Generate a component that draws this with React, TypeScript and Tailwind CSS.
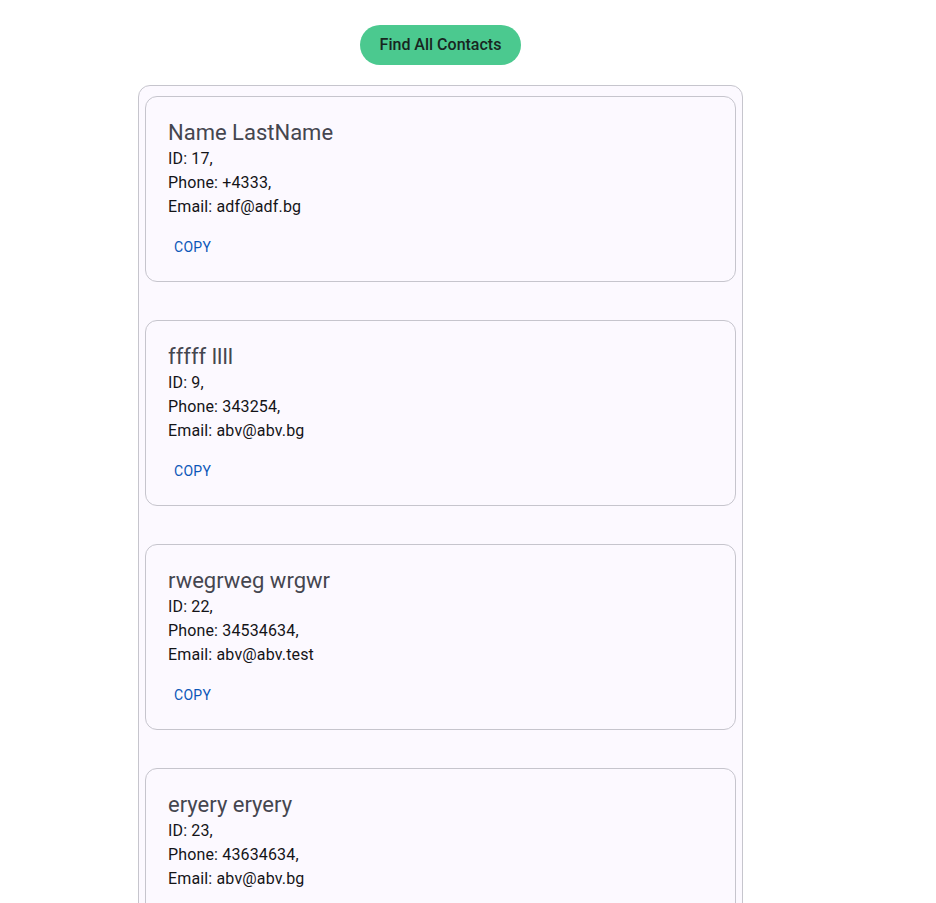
import React from 'react';

interface Contact {
  id: number;
  firstName: string;
  lastName: string;
  phone: string;
  email: string;
}

const contacts: Contact[] = [
  { id: 17, firstName: 'Name', lastName: 'LastName', phone: '+4333', email: 'adf@adf.bg' },
  { id: 9, firstName: 'fffff', lastName: 'llll', phone: '343254', email: 'abv@abv.bg' },
  { id: 22, firstName: 'rwegrweg', lastName: 'wrgwr', phone: '34534634', email: 'abv@abv.test' },
  { id: 23, firstName: 'eryery', lastName: 'eryery', phone: '43634634', email: 'abv@abv.bg' },
];

const ContactCard: React.FC<{ contact: Contact }> = ({ contact }) => {
  return (
    <div className="mx-[6px] rounded-xl border border-[#c6c5cd] bg-[#fcf9ff] px-[22px] pt-[22px] pb-[19px]">
      <h2 className="text-[22px] leading-[28px] text-[#45464f]">
        {contact.firstName} {contact.lastName}
      </h2>
      <div className="text-[16px] leading-6 font-normal tracking-[0.15px] text-[#141418]">
        <p>ID: {contact.id},</p>
        <p>Phone: {contact.phone},</p>
        <p>Email: {contact.email}</p>
      </div>
      <button className="mt-[13px] h-[30px] rounded px-[6px] text-[14px] font-normal uppercase tracking-[0.3px] text-[#0b57b8]">
        Copy
      </button>
    </div>
  );
};

export default function App() {
  return (
    <div className="min-h-screen bg-white font-['Roboto',sans-serif]">
      <div className="flex w-[605px] flex-col items-center ml-[138px] pt-[25px]">
        <button className="h-10 rounded-full bg-[#4bc98f] px-5 text-[16px] font-medium text-[#18261f]">
          Find All Contacts
        </button>
        <div className="mt-5 flex w-full flex-col gap-[38px] rounded-xl border border-[#c6c5cd] bg-[#fcf9ff] pt-[10px] pb-[10px]">
          {contacts.map((c) => (
            <ContactCard key={c.id} contact={c} />
          ))}
        </div>
      </div>
    </div>
  );
}
